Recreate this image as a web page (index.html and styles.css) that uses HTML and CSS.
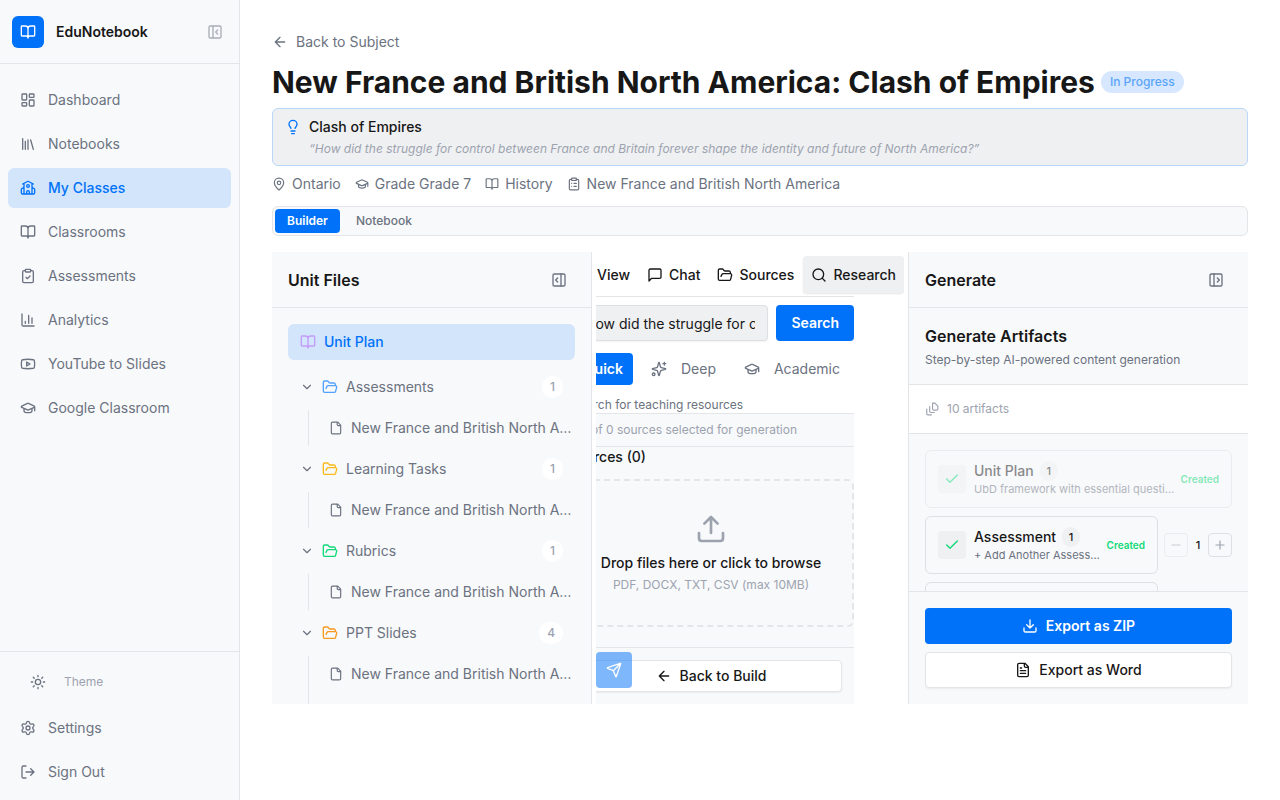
FILE: index.html
```html
<!DOCTYPE html>
<html lang="en">
<head>
    <meta charset="UTF-8">
    <meta name="viewport" content="width=device-width, initial-scale=1.0">
    <title>EduNotebook</title>
    <link rel="stylesheet" href="styles.css">
</head>
<body>

    <!-- icon set -->
    <svg class="sprite" aria-hidden="true">
        <symbol id="book" viewBox="0 0 24 24"><path d="M12 7v14M3 18a1 1 0 0 1-1-1V4a1 1 0 0 1 1-1h5a4 4 0 0 1 4 4 4 4 0 0 1 4-4h5a1 1 0 0 1 1 1v13a1 1 0 0 1-1 1h-6a3 3 0 0 0-3 3 3 3 0 0 0-3-3z"/></symbol>
        <symbol id="panel-left-close" viewBox="0 0 24 24"><rect x="3" y="3" width="18" height="18" rx="2"/><path d="M9 3v18M16 15l-3-3 3-3"/></symbol>
        <symbol id="panel-right-open" viewBox="0 0 24 24"><rect x="3" y="3" width="18" height="18" rx="2"/><path d="M15 3v18M10 15l-3-3 3-3"/></symbol>
        <symbol id="panel-left-open" viewBox="0 0 24 24"><rect x="3" y="3" width="18" height="18" rx="2"/><path d="M9 3v18M14 9l3 3-3 3"/></symbol>
        <symbol id="dashboard" viewBox="0 0 24 24"><rect x="3" y="3" width="7" height="9" rx="1"/><rect x="14" y="3" width="7" height="5" rx="1"/><rect x="14" y="12" width="7" height="9" rx="1"/><rect x="3" y="16" width="7" height="5" rx="1"/></symbol>
        <symbol id="library" viewBox="0 0 24 24"><path d="m16 6 4 14M12 6v14M8 8v12M4 4v16"/></symbol>
        <symbol id="school" viewBox="0 0 24 24"><path d="M14 21v-3a2 2 0 0 0-4 0v3M18 5v16M4 6l7.106-3.79a2 2 0 0 1 1.788 0L20 6M6 11l-3.52 2.147a1 1 0 0 0-.48.854V19a2 2 0 0 0 2 2h16a2 2 0 0 0 2-2v-5a1 1 0 0 0-.48-.853L18 11M6 5v16"/><circle cx="12" cy="9" r="2"/></symbol>
        <symbol id="clipboard-check" viewBox="0 0 24 24"><rect x="8" y="2" width="8" height="4" rx="1"/><path d="M16 4h2a2 2 0 0 1 2 2v14a2 2 0 0 1-2 2H6a2 2 0 0 1-2-2V6a2 2 0 0 1 2-2h2M9 14l2 2 4-4"/></symbol>
        <symbol id="clipboard-list" viewBox="0 0 24 24"><rect x="8" y="2" width="8" height="4" rx="1"/><path d="M16 4h2a2 2 0 0 1 2 2v14a2 2 0 0 1-2 2H6a2 2 0 0 1-2-2V6a2 2 0 0 1 2-2h2M12 11h4M12 16h4M8 11h.01M8 16h.01"/></symbol>
        <symbol id="chart" viewBox="0 0 24 24"><path d="M3 3v16a2 2 0 0 0 2 2h16M18 17V9M13 17V5M8 17v-3"/></symbol>
        <symbol id="youtube" viewBox="0 0 24 24"><path d="M2.5 17a24.12 24.12 0 0 1 0-10 2 2 0 0 1 1.4-1.4 49.56 49.56 0 0 1 16.2 0A2 2 0 0 1 21.5 7a24.12 24.12 0 0 1 0 10 2 2 0 0 1-1.4 1.4 49.55 49.55 0 0 1-16.2 0A2 2 0 0 1 2.5 17M10 15l5-3-5-3z"/></symbol>
        <symbol id="cap" viewBox="0 0 24 24"><path d="M21.42 10.922a1 1 0 0 0-.019-1.838L12.83 5.18a2 2 0 0 0-1.66 0L2.6 9.08a1 1 0 0 0 0 1.832l8.57 3.908a2 2 0 0 0 1.66 0zM22 10v6M6 12.5V16a6 3 0 0 0 12 0v-3.5"/></symbol>
        <symbol id="sun" viewBox="0 0 24 24"><circle cx="12" cy="12" r="4"/><path d="M12 2v2M12 20v2M4.93 4.93l1.41 1.41M17.66 17.66l1.41 1.41M2 12h2M20 12h2M6.34 17.66l-1.41 1.41M19.07 4.93l-1.41 1.41"/></symbol>
        <symbol id="settings" viewBox="0 0 24 24"><path d="M9.671 4.136a2.34 2.34 0 0 1 4.659 0 2.34 2.34 0 0 0 3.319 1.915 2.34 2.34 0 0 1 2.33 4.033 2.34 2.34 0 0 0 0 3.831 2.34 2.34 0 0 1-2.33 4.033 2.34 2.34 0 0 0-3.319 1.915 2.34 2.34 0 0 1-4.659 0 2.34 2.34 0 0 0-3.32-1.915 2.34 2.34 0 0 1-2.33-4.033 2.34 2.34 0 0 0 0-3.831A2.34 2.34 0 0 1 6.35 6.051a2.34 2.34 0 0 0 3.319-1.915"/><circle cx="12" cy="12" r="3"/></symbol>
        <symbol id="logout" viewBox="0 0 24 24"><path d="m16 17 5-5-5-5M21 12H9M9 21H5a2 2 0 0 1-2-2V5a2 2 0 0 1 2-2h4"/></symbol>
        <symbol id="arrow-left" viewBox="0 0 24 24"><path d="m12 19-7-7 7-7M19 12H5"/></symbol>
        <symbol id="bulb" viewBox="0 0 24 24"><path d="M15 14c.2-1 .7-1.7 1.5-2.5 1-.9 1.5-2.2 1.5-3.5A6 6 0 0 0 6 8c0 1 .2 2.2 1.5 3.5.7.7 1.3 1.5 1.5 2.5M9 18h6M10 22h4"/></symbol>
        <symbol id="pin" viewBox="0 0 24 24"><path d="M20 10c0 4.993-5.539 10.193-7.399 11.799a1 1 0 0 1-1.202 0C9.539 20.193 4 14.993 4 10a8 8 0 0 1 16 0"/><circle cx="12" cy="10" r="3"/></symbol>
        <symbol id="folder" viewBox="0 0 24 24"><path d="m6 14 1.5-2.9A2 2 0 0 1 9.24 10H20a2 2 0 0 1 1.94 2.5l-1.54 6a2 2 0 0 1-1.95 1.5H4a2 2 0 0 1-2-2V5a2 2 0 0 1 2-2h3.9a2 2 0 0 1 1.69.9l.81 1.2a2 2 0 0 0 1.67.9H18a2 2 0 0 1 2 2v2"/></symbol>
        <symbol id="file" viewBox="0 0 24 24"><path d="M15 2H6a2 2 0 0 0-2 2v16a2 2 0 0 0 2 2h12a2 2 0 0 0 2-2V7zM14 2v4a2 2 0 0 0 2 2h4"/></symbol>
        <symbol id="file-text" viewBox="0 0 24 24"><path d="M15 2H6a2 2 0 0 0-2 2v16a2 2 0 0 0 2 2h12a2 2 0 0 0 2-2V7zM14 2v4a2 2 0 0 0 2 2h4M10 9H8M16 13H8M16 17H8"/></symbol>
        <symbol id="file-stack" viewBox="0 0 24 24"><path d="M13 2h4l5 5v5a2 2 0 0 1-2 2h-5a2 2 0 0 1-2-2zM8 8v8a2 2 0 0 0 2 2h6M3 12v8a2 2 0 0 0 2 2h6"/></symbol>
        <symbol id="chevron-down" viewBox="0 0 24 24"><path d="m6 9 6 6 6-6"/></symbol>
        <symbol id="message" viewBox="0 0 24 24"><path d="M21 15a2 2 0 0 1-2 2H7l-4 4V5a2 2 0 0 1 2-2h14a2 2 0 0 1 2 2z"/></symbol>
        <symbol id="search" viewBox="0 0 24 24"><circle cx="11" cy="11" r="8"/><path d="m21 21-4.3-4.3"/></symbol>
        <symbol id="sparkles" viewBox="0 0 24 24"><path d="M9.937 15.5A2 2 0 0 0 8.5 14.063l-6.135-1.582a.5.5 0 0 1 0-.962L8.5 9.936A2 2 0 0 0 9.937 8.5l1.582-6.135a.5.5 0 0 1 .963 0L14.063 8.5A2 2 0 0 0 15.5 9.937l6.135 1.581a.5.5 0 0 1 0 .964L15.5 14.063a2 2 0 0 0-1.437 1.437l-1.582 6.135a.5.5 0 0 1-.963 0zM20 2v4M22 4h-4"/><circle cx="4" cy="20" r="2"/></symbol>
        <symbol id="upload" viewBox="0 0 24 24"><path d="M12 3v12M17 8l-5-5-5 5M21 15v4a2 2 0 0 1-2 2H5a2 2 0 0 1-2-2v-4"/></symbol>
        <symbol id="download" viewBox="0 0 24 24"><path d="M12 15V3M7 10l5 5 5-5M21 15v4a2 2 0 0 1-2 2H5a2 2 0 0 1-2-2v-4"/></symbol>
        <symbol id="send" viewBox="0 0 24 24"><path d="M14.536 21.686a.5.5 0 0 0 .937-.024l6.5-19a.496.496 0 0 0-.635-.635l-19 6.5a.5.5 0 0 0-.024.937l7.93 3.18a2 2 0 0 1 1.112 1.11zM21.854 2.147l-10.94 10.939"/></symbol>
        <symbol id="check" viewBox="0 0 24 24"><path d="M20 6 9 17l-5-5"/></symbol>
        <symbol id="minus" viewBox="0 0 24 24"><path d="M5 12h14"/></symbol>
        <symbol id="plus" viewBox="0 0 24 24"><path d="M5 12h14M12 5v14"/></symbol>
    </svg>

    <div class="app">
        <aside class="sidebar">
            <div class="brand">
                <span class="logo"><svg class="icon"><use href="#book"/></svg></span>
                <span class="brand-name">EduNotebook</span>
                <button class="icon-btn muted" type="button" aria-label="Collapse sidebar"><svg class="icon"><use href="#panel-left-close"/></svg></button>
            </div>
            <nav class="nav">
                <a class="nav-item" href="#"><svg class="icon"><use href="#dashboard"/></svg>Dashboard</a>
                <a class="nav-item" href="#"><svg class="icon"><use href="#library"/></svg>Notebooks</a>
                <a class="nav-item active" href="#"><svg class="icon"><use href="#school"/></svg>My Classes</a>
                <a class="nav-item" href="#"><svg class="icon"><use href="#book"/></svg>Classrooms</a>
                <a class="nav-item" href="#"><svg class="icon"><use href="#clipboard-check"/></svg>Assessments</a>
                <a class="nav-item" href="#"><svg class="icon"><use href="#chart"/></svg>Analytics</a>
                <a class="nav-item" href="#"><svg class="icon"><use href="#youtube"/></svg>YouTube to Slides</a>
                <a class="nav-item" href="#"><svg class="icon"><use href="#cap"/></svg>Google Classroom</a>
            </nav>
            <div class="sidebar-footer">
                <button class="theme-btn" type="button"><svg class="icon"><use href="#sun"/></svg>Theme</button>
                <a class="nav-item" href="#"><svg class="icon"><use href="#settings"/></svg>Settings</a>
                <a class="nav-item" href="#"><svg class="icon"><use href="#logout"/></svg>Sign Out</a>
            </div>
        </aside>

        <main class="main">
            <a class="back" href="#"><svg class="icon"><use href="#arrow-left"/></svg>Back to Subject</a>
            <div class="title-row">
                <h1>New France and British North America: Clash of Empires</h1>
                <span class="status">In Progress</span>
            </div>

            <div class="idea">
                <svg class="icon"><use href="#bulb"/></svg>
                <div class="idea-text">
                    <p class="idea-title">Clash of Empires</p>
                    <p class="idea-quote">“How did the struggle for control between France and Britain forever shape the identity and future of North America?”</p>
                </div>
            </div>

            <ul class="meta">
                <li><svg class="icon small"><use href="#pin"/></svg>Ontario</li>
                <li><svg class="icon small"><use href="#cap"/></svg>Grade Grade 7</li>
                <li><svg class="icon small"><use href="#book"/></svg>History</li>
                <li><svg class="icon small"><use href="#clipboard-list"/></svg>New France and British North America</li>
            </ul>

            <div class="view-tabs">
                <button class="view-tab active" type="button">Builder</button>
                <button class="view-tab" type="button">Notebook</button>
            </div>

            <div class="workspace">
                <section class="files">
                    <div class="panel-header">
                        <h2>Unit Files</h2>
                        <button class="icon-btn" type="button" aria-label="Collapse files"><svg class="icon"><use href="#panel-right-open"/></svg></button>
                    </div>
                    <div class="tree">
                        <a class="unit-plan" href="#"><svg class="icon"><use href="#book"/></svg>Unit Plan</a>

                        <button class="folder blue" type="button"><svg class="icon small"><use href="#chevron-down"/></svg><svg class="icon"><use href="#folder"/></svg><span class="folder-name">Assessments</span><span class="count">1</span></button>
                        <div class="folder-files">
                            <a class="file" href="#"><svg class="icon small"><use href="#file"/></svg><span class="file-name">New France and British North America</span></a>
                        </div>

                        <button class="folder amber" type="button"><svg class="icon small"><use href="#chevron-down"/></svg><svg class="icon"><use href="#folder"/></svg><span class="folder-name">Learning Tasks</span><span class="count">1</span></button>
                        <div class="folder-files">
                            <a class="file" href="#"><svg class="icon small"><use href="#file"/></svg><span class="file-name">New France and British North America</span></a>
                        </div>

                        <button class="folder green" type="button"><svg class="icon small"><use href="#chevron-down"/></svg><svg class="icon"><use href="#folder"/></svg><span class="folder-name">Rubrics</span><span class="count">1</span></button>
                        <div class="folder-files">
                            <a class="file" href="#"><svg class="icon small"><use href="#file"/></svg><span class="file-name">New France and British North America</span></a>
                        </div>

                        <button class="folder orange" type="button"><svg class="icon small"><use href="#chevron-down"/></svg><svg class="icon"><use href="#folder"/></svg><span class="folder-name">PPT Slides</span><span class="count">4</span></button>
                        <div class="folder-files">
                            <a class="file" href="#"><svg class="icon small"><use href="#file"/></svg><span class="file-name">New France and British North America</span></a>
                            <a class="file" href="#"><svg class="icon small"><use href="#file"/></svg><span class="file-name">New France and British North America</span></a>
                        </div>
                    </div>
                </section>

                <section class="center">
                    <div class="mode-tabs">
                        <button class="mode-tab" type="button">View</button>
                        <button class="mode-tab" type="button"><svg class="icon"><use href="#message"/></svg>Chat</button>
                        <button class="mode-tab" type="button"><svg class="icon"><use href="#folder"/></svg>Sources</button>
                        <button class="mode-tab active" type="button"><svg class="icon"><use href="#search"/></svg>Research</button>
                    </div>
                    <div class="research-clip">
                        <div class="research">
                            <form class="search-form">
                                <input type="text" aria-label="Research question" value="How did the struggle for control between France and Britain">
                                <button class="primary" type="button">Search</button>
                            </form>
                            <div class="depths">
                                <button class="depth active" type="button">Quick</button>
                                <button class="depth" type="button"><svg class="icon"><use href="#sparkles"/></svg>Deep</button>
                                <button class="depth" type="button"><svg class="icon"><use href="#cap"/></svg>Academic</button>
                            </div>
                            <p class="hint">Search for teaching resources</p>
                            <p class="selected">0 of 0 sources selected for generation</p>
                            <div class="sources">
                                <h3>Sources (0)</h3>
                                <button class="dropzone" type="button">
                                    <svg class="icon large"><use href="#upload"/></svg>
                                    <span class="drop-title">Drop files here or click to browse</span>
                                    <span class="drop-note">PDF, DOCX, TXT, CSV (max 10MB)</span>
                                </button>
                            </div>
                            <div class="research-footer">
                                <button class="outline" type="button"><svg class="icon"><use href="#arrow-left"/></svg>Back to Build</button>
                            </div>
                        </div>
                    </div>
                    <button class="send" type="button" aria-label="Send" disabled><svg class="icon"><use href="#send"/></svg></button>
                </section>

                <section class="generate">
                    <div class="panel-header">
                        <h2>Generate</h2>
                        <button class="icon-btn" type="button" aria-label="Collapse generate"><svg class="icon"><use href="#panel-left-open"/></svg></button>
                    </div>
                    <div class="generate-intro">
                        <h2>Generate Artifacts</h2>
                        <p>Step-by-step AI-powered content generation</p>
                    </div>
                    <p class="artifact-total"><svg class="icon small"><use href="#file-stack"/></svg>10 artifacts</p>
                    <div class="artifacts">
                        <div class="artifact-row">
                            <button class="artifact" type="button" disabled>
                                <span class="check"><svg class="icon"><use href="#check"/></svg></span>
                                <span class="artifact-text">
                                    <span class="artifact-name">Unit Plan <span class="badge">1</span></span>
                                    <span class="artifact-desc">UbD framework with essential questions</span>
                                </span>
                                <span class="created">Created</span>
                            </button>
                        </div>
                        <div class="artifact-row">
                            <button class="artifact" type="button">
                                <span class="check"><svg class="icon"><use href="#check"/></svg></span>
                                <span class="artifact-text">
                                    <span class="artifact-name">Assessment <span class="badge">1</span></span>
                                    <span class="artifact-desc">+ Add Another Assessment</span>
                                </span>
                                <span class="created">Created</span>
                            </button>
                            <div class="stepper">
                                <button type="button" aria-label="Fewer" disabled><svg class="icon small"><use href="#minus"/></svg></button>
                                <span>1</span>
                                <button type="button" aria-label="More"><svg class="icon small"><use href="#plus"/></svg></button>
                            </div>
                        </div>
                        <div class="artifact-row">
                            <button class="artifact" type="button" aria-label="Learning Task"></button>
                            <div class="stepper"></div>
                        </div>
                    </div>
                    <div class="exports">
                        <button class="primary" type="button"><svg class="icon"><use href="#download"/></svg>Export as ZIP</button>
                        <button class="outline" type="button"><svg class="icon"><use href="#file-text"/></svg>Export as Word</button>
                    </div>
                </section>
            </div>
        </main>
    </div>

</body>
</html>
```
FILE: styles.css
```css
* {
    box-sizing: border-box;
}

body {
    margin: 0;
    font-family: Inter, "Liberation Sans", sans-serif;
    font-size: 14px;
    line-height: 20px;
    color: #171717;
    background: #fff;
}

h1, h2, h3, p, ul {
    margin: 0;
    padding: 0;
}

a {
    color: inherit;
    text-decoration: none;
}

button, input {
    font: inherit;
    color: inherit;
    border: 0;
    padding: 0;
    background: none;
}

button {
    display: flex;
    align-items: center;
    white-space: nowrap;
}

.sprite {
    display: none;
}

.icon {
    flex: none;
    width: 16px;
    height: 16px;
    fill: none;
    stroke: currentColor;
    stroke-width: 2;
    stroke-linecap: round;
    stroke-linejoin: round;
}

.icon.small {
    width: 14px;
    height: 14px;
}

.icon.large {
    width: 32px;
    height: 32px;
}

.app {
    display: flex;
    height: 100vh;
}

/* Sidebar */
.sidebar {
    flex: 0 0 240px;
    display: flex;
    flex-direction: column;
    background: #f8f9fb;
    border-right: 1px solid #e4e5e8;
    color: #6b7280;
}

.brand {
    display: flex;
    align-items: center;
    gap: 12px;
    height: 64px;
    padding: 0 12px;
    border-bottom: 1px solid #e4e5e8;
}

.logo {
    display: grid;
    place-items: center;
    width: 32px;
    height: 32px;
    border-radius: 6px;
    background: #0072f9;
    color: #fff;
}

.brand-name {
    flex: 1;
    font-weight: 600;
    color: #171717;
}

.icon-btn {
    padding: 4px;
    color: #6b7280;
}

.icon-btn.muted {
    color: #a8adb8;
}

.nav {
    flex: 1;
    display: flex;
    flex-direction: column;
    gap: 4px;
    padding: 16px 8px;
}

.nav-item {
    display: flex;
    align-items: center;
    gap: 12px;
    height: 40px;
    padding: 0 12px;
    border-radius: 6px;
}

.nav-item.active {
    background: #d3e5fb;
    color: #0072f9;
    font-weight: 500;
}

.sidebar-footer {
    display: flex;
    flex-direction: column;
    gap: 4px;
    padding: 8px;
    border-top: 1px solid #e4e5e8;
}

.theme-btn {
    gap: 18px;
    height: 44px;
    padding: 0 22px;
    font-size: 12px;
    color: #9ca3af;
}

.theme-btn .icon {
    color: #6b7280;
}

/* Main column */
.main {
    flex: 1;
    min-width: 0;
    display: flex;
    flex-direction: column;
    padding: 32px 32px 96px;
}

.back {
    display: flex;
    align-items: center;
    gap: 8px;
    color: #6b7280;
}

.title-row {
    display: flex;
    align-items: center;
    gap: 6px;
    margin-top: 12px;
}

h1 {
    font-size: 30px;
    line-height: 36px;
    font-weight: 700;
    white-space: nowrap;
}

.status {
    padding: 3px 9px;
    border-radius: 11px;
    background: #d6e7ff;
    color: #5aa5fa;
    font-size: 12px;
    line-height: 16px;
    font-weight: 500;
    white-space: nowrap;
}

.idea {
    display: flex;
    gap: 8px;
    margin-top: 8px;
    padding: 8px 12px;
    border: 1px solid #b9d7f8;
    border-radius: 6px;
    background: #eff0f2;
}

.idea .icon {
    margin-top: 2px;
    color: #0072f9;
}

.idea-title {
    font-weight: 500;
}

.idea-quote {
    margin-top: 4px;
    font-size: 12px;
    line-height: 16px;
    font-style: italic;
    color: #9ca3af;
}

.meta {
    display: flex;
    gap: 14px;
    margin-top: 8px;
    list-style: none;
    color: #6b7280;
}

.meta li {
    display: flex;
    align-items: center;
    gap: 6px;
}

.view-tabs {
    display: flex;
    gap: 4px;
    margin-top: 12px;
    padding: 2px;
    border: 1px solid #e4e5e8;
    border-radius: 6px;
    background: #f8f9fb;
}

.view-tab {
    height: 24px;
    padding: 0 12px;
    border-radius: 4px;
    font-size: 12px;
    font-weight: 500;
    color: #6b7280;
}

.view-tab.active {
    background: #0072f9;
    color: #fff;
    font-weight: 600;
}

.workspace {
    flex: 1;
    display: flex;
    min-height: 0;
    margin-top: 16px;
}

.panel-header {
    flex: none;
    display: flex;
    align-items: center;
    justify-content: space-between;
    height: 56px;
    padding: 0 20px 0 16px;
    border-bottom: 1px solid #e4e5e8;
}

h2 {
    font-size: 16px;
    line-height: 24px;
    font-weight: 600;
}

/* Unit files */
.files {
    flex: 0 0 320px;
    display: flex;
    flex-direction: column;
    overflow: hidden;
    background: #f8f9fb;
    border-right: 1px solid #e4e5e8;
}

.tree {
    display: flex;
    flex-direction: column;
    gap: 4px;
    padding: 16px;
    color: #6b7280;
}

.unit-plan {
    display: flex;
    align-items: center;
    gap: 8px;
    height: 36px;
    margin-bottom: 4px;
    padding: 0 12px;
    border-radius: 6px;
    background: #d3e5fb;
    color: #0072f9;
    font-weight: 500;
}

.unit-plan .icon {
    color: #c49bfb;
}

.folder {
    gap: 8px;
    height: 38px;
    padding: 0 12px;
}

.folder-name {
    flex: 1;
    text-align: left;
}

.folder.blue .icon:not(.small) {
    color: #51a2ff;
}

.folder.amber .icon:not(.small) {
    color: #fbb91a;
}

.folder.green .icon:not(.small) {
    color: #10d978;
}

.folder.orange .icon:not(.small) {
    color: #f7981f;
}

.count {
    padding: 3px 8px;
    border-radius: 11px;
    background: #fff;
    color: #9ca3af;
    font-size: 12px;
    line-height: 16px;
    font-weight: 500;
}

.folder-files {
    display: flex;
    flex-direction: column;
    gap: 4px;
    margin-left: 20px;
    padding-left: 8px;
    border-left: 1px solid #e4e5e8;
}

.file {
    display: flex;
    align-items: center;
    gap: 8px;
    height: 36px;
    padding: 0 0 0 12px;
}

.file-name {
    overflow: hidden;
    text-overflow: ellipsis;
    white-space: nowrap;
}

/* Research */
.center {
    position: relative;
    flex: 1;
    min-width: 0;
    display: flex;
    flex-direction: column;
    margin: 0 4px;
    overflow: hidden;
}

.mode-tabs {
    display: flex;
    justify-content: flex-end;
    gap: 1px;
    height: 44px;
    padding: 4px 0 3px;
}

.mode-tab {
    gap: 6px;
    padding: 0 8px;
    border-radius: 4px;
    font-weight: 500;
}

.mode-tab.active {
    background: #eff0f2;
    box-shadow: 0 1px 2px rgba(0, 0, 0, 0.1);
}

.research-clip {
    flex: 1;
    display: flex;
    justify-content: flex-end;
    min-height: 0;
    margin-right: 50px;
    overflow: hidden;
    border-top: 1px solid #e4e5e8;
}

.research {
    flex: 0 0 286px;
    min-width: 0;
    display: flex;
    flex-direction: column;
}

.search-form {
    display: flex;
    gap: 8px;
    margin-top: 8px;
}

.search-form input {
    flex: 1;
    min-width: 0;
    height: 36px;
    padding: 0 12px 0 16px;
    border: 1px solid #dedfe2;
    border-radius: 4px;
    background: #eff0f2;
    box-shadow: 0 1px 2px rgba(0, 0, 0, 0.05);
}

.primary, .outline {
    justify-content: center;
    gap: 8px;
    height: 36px;
    padding: 0 15px;
    border-radius: 4px;
    font-weight: 500;
}

.primary {
    background: #0072f9;
    color: #fff;
    font-weight: 600;
}

.outline {
    border: 1px solid #e4e5e8;
    background: #fff;
    box-shadow: 0 1px 2px rgba(0, 0, 0, 0.06);
}

.depths {
    display: flex;
    justify-content: flex-end;
    gap: 8px;
    margin: 12px 4px 0 0;
}

.depth {
    gap: 14px;
    height: 32px;
    padding: 0 10px;
    border-radius: 4px;
    color: #6b7280;
}

.depth.active {
    background: #0072f9;
    color: #fff;
    font-weight: 600;
}

.hint {
    margin-top: 12px;
    padding-left: 4px;
    font-size: 12px;
    line-height: 16px;
    color: #6b7280;
}

.selected {
    padding: 8px 12px;
    border: solid #e4e5e8;
    border-width: 1px 0;
    background: #f8f9fb;
    font-size: 12px;
    line-height: 16px;
    color: #9ca3af;
}

.sources {
    flex: 1;
    background: #f8f9fb;
}

h3 {
    font-size: 14px;
    line-height: 20px;
    font-weight: 500;
}

.dropzone {
    flex-direction: column;
    justify-content: center;
    width: 100%;
    height: 148px;
    margin-top: 12px;
    border: 2px dashed #e4e5e8;
    border-radius: 6px;
}

.dropzone .icon {
    color: #9ca3af;
}

.drop-title {
    margin-top: 8px;
    font-weight: 500;
}

.drop-note {
    margin-top: 4px;
    font-size: 12px;
    line-height: 16px;
    color: #9ca3af;
}

.research-footer {
    padding: 12px;
    border-top: 1px solid #e4e5e8;
    background: #f8f9fb;
}

.research-footer .outline {
    width: 100%;
    height: 32px;
}

.send {
    position: absolute;
    left: 0;
    bottom: 16px;
    justify-content: center;
    width: 36px;
    height: 36px;
    border-radius: 4px;
    background: #0072f9;
    color: #fff;
    opacity: 0.5;
}

/* Generate */
.generate {
    flex: 0 0 340px;
    min-width: 0;
    display: flex;
    flex-direction: column;
    background: #f8f9fb;
    border-left: 1px solid #e4e5e8;
}

.generate-intro {
    padding: 16px;
    border-bottom: 1px solid #e4e5e8;
}

.generate-intro p {
    margin-top: 4px;
    font-size: 12px;
    line-height: 16px;
    color: #6b7280;
}

.artifact-total {
    display: flex;
    align-items: center;
    gap: 8px;
    padding: 16px;
    border-bottom: 1px solid #e4e5e8;
    background: #fff;
    font-size: 12px;
    line-height: 16px;
    color: #9ca3af;
}

.artifacts {
    flex: 1;
    display: flex;
    flex-direction: column;
    gap: 8px;
    min-height: 0;
    padding: 16px 16px 0;
    overflow: hidden;
}

.artifact-row {
    flex: none;
    display: flex;
    align-items: center;
    gap: 6px;
}

.artifact {
    flex: 1;
    min-width: 0;
    height: 58px;
    padding: 0 12px;
    border: 1px solid #dfe0e4;
    border-radius: 6px;
    text-align: left;
}

.artifact:disabled, .stepper button:disabled {
    opacity: 0.5;
}

.check {
    flex: none;
    display: grid;
    place-items: center;
    width: 28px;
    height: 28px;
    margin-right: 8px;
    border-radius: 4px;
    background: #eff0f2;
    color: #10d978;
}

.artifact-text {
    flex: 1;
    min-width: 0;
}

.artifact-name {
    display: flex;
    align-items: center;
    gap: 6px;
    font-weight: 500;
}

.badge {
    width: 18px;
    border-radius: 10px;
    background: #eff0f2;
    font-size: 11px;
    line-height: 20px;
    text-align: center;
}

.artifact-desc {
    display: block;
    overflow: hidden;
    text-overflow: ellipsis;
    font-size: 11px;
    line-height: 16px;
    color: #6b7280;
}

.created {
    margin-left: 2px;
    font-size: 10px;
    font-weight: 600;
    color: #10d978;
}

.stepper {
    flex: none;
    display: flex;
    align-items: center;
    justify-content: space-between;
    width: 68px;
    font-size: 11px;
    font-weight: 500;
}

.stepper button {
    justify-content: center;
    width: 24px;
    height: 24px;
    border: 1px solid #dfe0e4;
    border-radius: 4px;
    color: #9ca3af;
}

.exports {
    display: flex;
    flex-direction: column;
    gap: 8px;
    padding: 16px;
    border-top: 1px solid #e4e5e8;
}
```
